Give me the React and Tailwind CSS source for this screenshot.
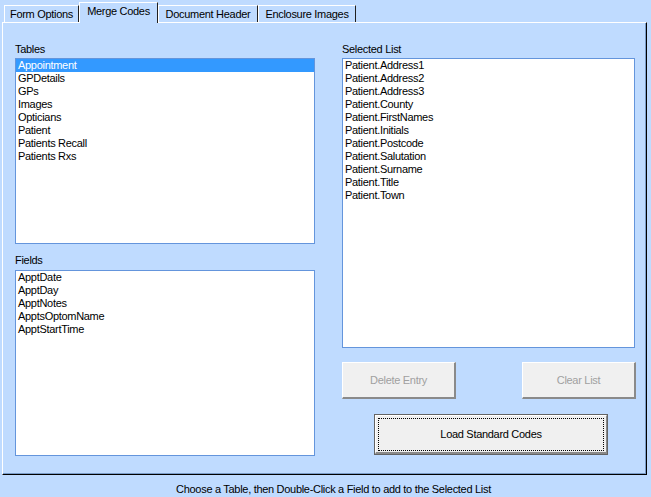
const TABLES = ['Appointment', 'GPDetails', 'GPs', 'Images', 'Opticians', 'Patient', 'Patients Recall', 'Patients Rxs']
const FIELDS = ['ApptDate', 'ApptDay', 'ApptNotes', 'ApptsOptomName', 'ApptStartTime']
const SELECTED = [
  'Patient.Address1',
  'Patient.Address2',
  'Patient.Address3',
  'Patient.County',
  'Patient.FirstNames',
  'Patient.Initials',
  'Patient.Postcode',
  'Patient.Salutation',
  'Patient.Surname',
  'Patient.Title',
  'Patient.Town',
]

const TABS = [
  { label: 'Form Options', w: 'w-[75px]' },
  { label: 'Merge Codes', w: 'w-[79px]', active: true },
  { label: 'Document Header', w: 'w-[100px]' },
  { label: 'Enclosure Images', w: 'w-[98px]' },
]

function ListBox({ items, selected, className }) {
  return (
    <div className={`bg-white border border-[#6495dc] overflow-hidden ${className}`}>
      {items.map((item) => (
        <div
          key={item}
          className={`h-[13px] leading-[13px] pl-[2px] whitespace-nowrap ${
            item === selected ? 'bg-[#3399ff] text-white' : 'text-black'
          }`}
        >
          {item}
        </div>
      ))}
    </div>
  )
}

function Button({ children, disabled, isDefault, className }) {
  if (isDefault) {
    return (
      <div className={`border border-[#646464] ${className}`}>
        <div className="h-full bg-[#f0f0f0] border-t border-l border-white border-b-2 border-r border-b-[#8a8a8a] border-r-[#8a8a8a] flex items-center justify-center outline-dotted outline-1 outline-black outline-offset-[-4px] text-black">
          {children}
        </div>
      </div>
    )
  }
  return (
    <div
      className={`bg-[#f0f0f0] border-t border-l border-white border-b-2 border-r-2 border-b-[#8a8a8a] border-r-[#8a8a8a] flex items-center justify-center ${
        disabled ? 'text-[#a0a0a0]' : 'text-black'
      } ${className}`}
    >
      {children}
    </div>
  )
}

export default function App() {
  return (
    <div className="w-[651px] h-[497px] bg-[#bfdbff] font-['Liberation_Sans',Arial,sans-serif] text-[11px] tracking-[-0.3px] text-black overflow-hidden">
      {/* tabs */}
      <div className="h-[22px] flex items-end pl-[4px]">
        {TABS.map((t) =>
          t.active ? (
            <div
              key={t.label}
              className={`${t.w} h-[21px] -mb-px relative z-10 bg-[#bfdbff] border-t border-l border-white border-r border-r-[#202020] flex items-start justify-center pt-[2px] leading-[13px]`}
            >
              {t.label}
            </div>
          ) : (
            <div
              key={t.label}
              className={`${t.w} h-[17px] border-t border-l border-white border-r border-r-[#202020] flex items-start justify-center pt-[2px] leading-[13px]`}
            >
              {t.label}
            </div>
          )
        )}
      </div>

      {/* panel */}
      <div className="ml-[2px] w-[645px] h-[453px] border-t border-l border-white border-r border-b border-r-black border-b-black shadow-[inset_-1px_-1px_0_#7a9cc8] flex pl-[12px] pt-[20px]">
        <div className="w-[300px] flex flex-col">
          <div className="h-[13px] leading-[13px]">Tables</div>
          <ListBox items={TABLES} selected="Appointment" className="mt-[2px] h-[186px]" />
          <div className="h-[13px] leading-[13px] mt-[10px]">Fields</div>
          <ListBox items={FIELDS} className="mt-[3px] h-[186px]" />
        </div>

        <div className="w-[294px] ml-[27px] flex flex-col">
          <div className="h-[13px] leading-[13px]">Selected List</div>
          <ListBox items={SELECTED} className="mt-[2px] h-[290px] w-[293px]" />
          <div className="flex justify-between mt-[14px]">
            <Button disabled className="w-[114px] h-[37px]">Delete Entry</Button>
            <Button disabled className="w-[114px] h-[37px]">Clear List</Button>
          </div>
          <Button isDefault className="w-[234px] h-[41px] ml-[32px] mt-[15px]">
            Load Standard Codes
          </Button>
        </div>
      </div>

      {/* status */}
      <div className="mt-[8px] h-[13px] leading-[13px] text-center pl-[16px]">
        Choose a Table, then Double-Click a Field to add to the Selected List
      </div>
    </div>
  )
}
